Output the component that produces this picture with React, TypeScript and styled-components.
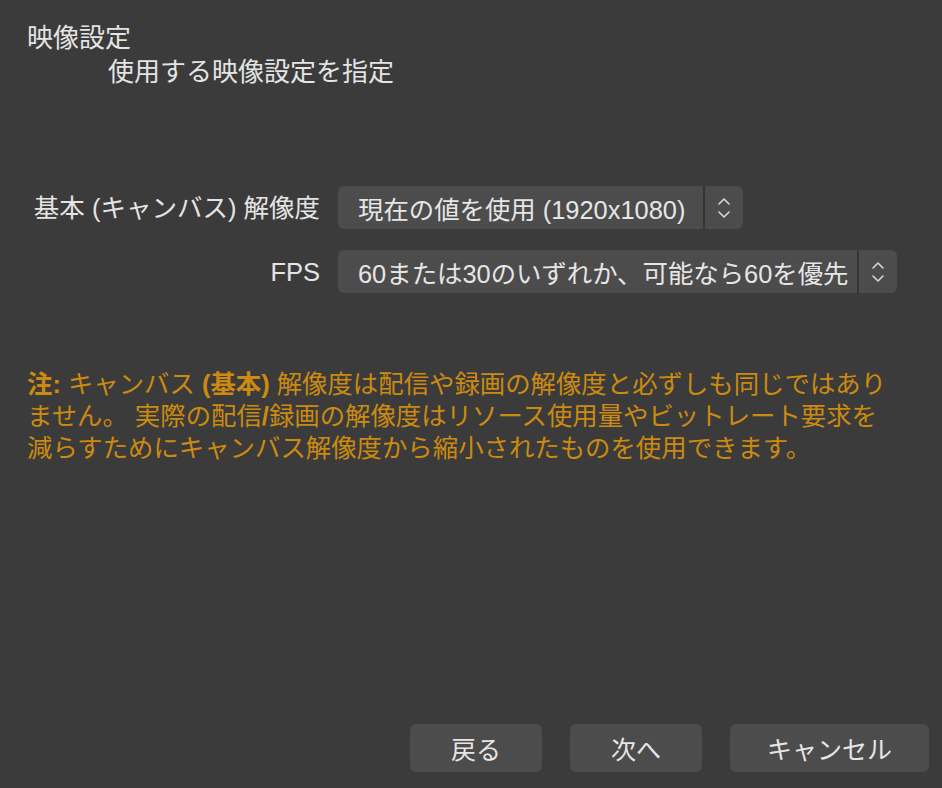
import React from 'react';
import styled, { createGlobalStyle } from 'styled-components';

const GlobalStyle = createGlobalStyle`
  html, body {
    margin: 0;
    padding: 0;
    background: #3b3b3b;
  }
  * {
    box-sizing: border-box;
  }
`;

// latin glyphs from Liberation Sans (Helvetica-ish widths), kana/kanji from Noto CJK
const FONT = `"Liberation Sans", "Noto Sans CJK JP", "Noto Sans", sans-serif`;

const Page = styled.div`
  display: flex;
  flex-direction: column;
  height: 788px;
  padding: 22px 13px 16px 27px;
  background: #3b3b3b;
  color: #e4e4e4;
  font-family: ${FONT};
  overflow: hidden;
`;

const Title = styled.div`
  font-size: 26px;
  line-height: 32px;
`;

const Subtitle = styled.div`
  margin-top: 2px;
  padding-left: 81px;
  font-size: 26px;
  line-height: 32px;
`;

const Form = styled.div`
  display: grid;
  grid-template-columns: 293px auto;
  column-gap: 18px;
  row-gap: 21px;
  margin-top: 98px;
  align-items: center;
`;

const Label = styled.div`
  text-align: right;
  font-size: 25.5px;
  line-height: 32px;
  color: #e4e4e4;
`;

const Select = styled.div<{ $width: number }>`
  justify-self: start;
  display: flex;
  align-items: stretch;
  width: ${({ $width }) => $width}px;
  height: 43px;
  background: #4c4c4c;
  border-radius: 6px;
  overflow: hidden;
`;

const SelectValue = styled.div`
  flex: 1;
  display: flex;
  align-items: center;
  padding-left: 20px;
  font-size: 25.4px;
  white-space: nowrap;
  color: #e6e6e6;
`;

const Stepper = styled.div`
  width: 40px;
  display: flex;
  align-items: center;
  justify-content: center;
  border-left: 2px solid #353535;
`;

const Note = styled.p`
  margin: 75px 0 0;
  font-size: 25.4px;
  line-height: 32px;
  color: #cc8a10;
  white-space: nowrap;
`;

const Strong = styled.b`
  font-weight: 700;
`;

const Footer = styled.div`
  margin-top: auto;
  display: flex;
  justify-content: flex-end;
  gap: 28px;
`;

const Button = styled.button<{ $width: number }>`
  width: ${({ $width }) => $width}px;
  height: 48px;
  border: none;
  border-radius: 6px;
  background: #4c4c4c;
  color: #e6e6e6;
  font-family: ${FONT};
  font-size: 25px;
  padding: 0;
  cursor: pointer;
`;

const UpDown = () => (
  <svg width="14" height="24" viewBox="0 0 14 24" fill="none">
    <path d="M2 8 L7 3 L12 8" stroke="#d8d8d8" strokeWidth="1.6" strokeLinecap="round" strokeLinejoin="round" />
    <path d="M2 16 L7 21 L12 16" stroke="#d8d8d8" strokeWidth="1.6" strokeLinecap="round" strokeLinejoin="round" />
  </svg>
);

const App = () => {
  return (
    <>
      <GlobalStyle />
      <Page>
        <Title>映像設定</Title>
        <Subtitle>使用する映像設定を指定</Subtitle>

        <Form>
          <Label>基本 (キャンバス) 解像度</Label>
          <Select $width={405}>
            <SelectValue>現在の値を使用 (1920x1080)</SelectValue>
            <Stepper><UpDown /></Stepper>
          </Select>

          <Label>FPS</Label>
          <Select $width={559}>
            <SelectValue>60または30のいずれか、可能なら60を優先</SelectValue>
            <Stepper><UpDown /></Stepper>
          </Select>
        </Form>

        <Note>
          <Strong>注:</Strong> キャンバス <Strong>(基本)</Strong> 解像度は配信や録画の解像度と必ずしも同じではあり
          <br />
          ません。 実際の配信<Strong>/</Strong>録画の解像度はリソース使用量やビットレート要求を
          <br />
          減らすためにキャンバス解像度から縮小されたものを使用できます。
        </Note>

        <Footer>
          <Button $width={132}>戻る</Button>
          <Button $width={132}>次へ</Button>
          <Button $width={199}>キャンセル</Button>
        </Footer>
      </Page>
    </>
  );
};

export default App;
